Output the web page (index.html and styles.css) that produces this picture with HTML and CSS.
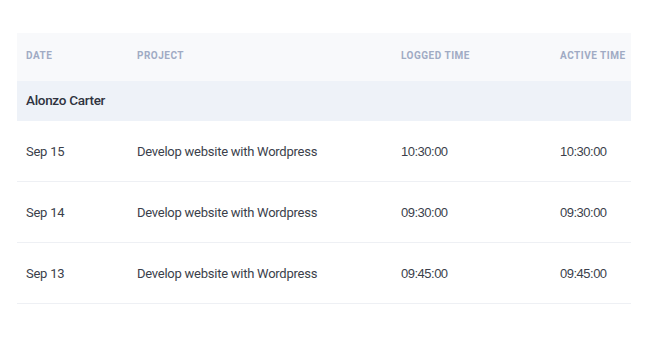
FILE: index.html
```html
<!DOCTYPE html>
<html>
<head>
<meta charset="utf-8">
<link rel="stylesheet" href="styles.css">
</head>
<body>
<div class="table">
  <div class="row head">
    <div class="c date">DATE</div>
    <div class="c project">PROJECT</div>
    <div class="c logged">LOGGED TIME</div>
    <div class="c active">ACTIVE TIME</div>
  </div>
  <div class="row group">
    <div class="c">Alonzo Carter</div>
  </div>
  <div class="row item">
    <div class="c date">Sep 15</div>
    <div class="c project">Develop website with Wordpress</div>
    <div class="c logged time">10:30:00</div>
    <div class="c active time">10:30:00</div>
  </div>
  <div class="row item">
    <div class="c date">Sep 14</div>
    <div class="c project">Develop website with Wordpress</div>
    <div class="c logged time">09:30:00</div>
    <div class="c active time">09:30:00</div>
  </div>
  <div class="row item">
    <div class="c date">Sep 13</div>
    <div class="c project">Develop website with Wordpress</div>
    <div class="c logged time">09:45:00</div>
    <div class="c active time">09:45:00</div>
  </div>
</div>
</body>
</html>
```
FILE: styles.css
```css
html, body { margin: 0; padding: 0; background: #ffffff; }
body { padding: 33px 19px 0 17px; font-family: Roboto, "Liberation Sans", sans-serif; color: #3b3f4b; }
.table { width: 614px; }
.row { display: grid; grid-template-columns: 111px 264px 159px 1fr; align-items: center; padding-left: 9px; }
.head { height: 48px; background: #f8f9fb; padding-top: 0; }
.head .c { font-size: 10px; font-weight: 700; letter-spacing: 0.5px; color: #a0abc4; padding-bottom: 3px; }
.group { height: 40px; background: #eef2f8; display: flex; padding-bottom: 2px; box-sizing: border-box; }
.group .c { font-size: 13.5px; font-weight: 500; color: #2f3340; letter-spacing: -0.3px; }
.item { height: 61px; border-bottom: 1px solid #eef0f4; box-sizing: border-box; font-size: 13px; letter-spacing: -0.25px; }
.time { font-family: "Liberation Sans", Arial, sans-serif; letter-spacing: -0.5px; }
```
